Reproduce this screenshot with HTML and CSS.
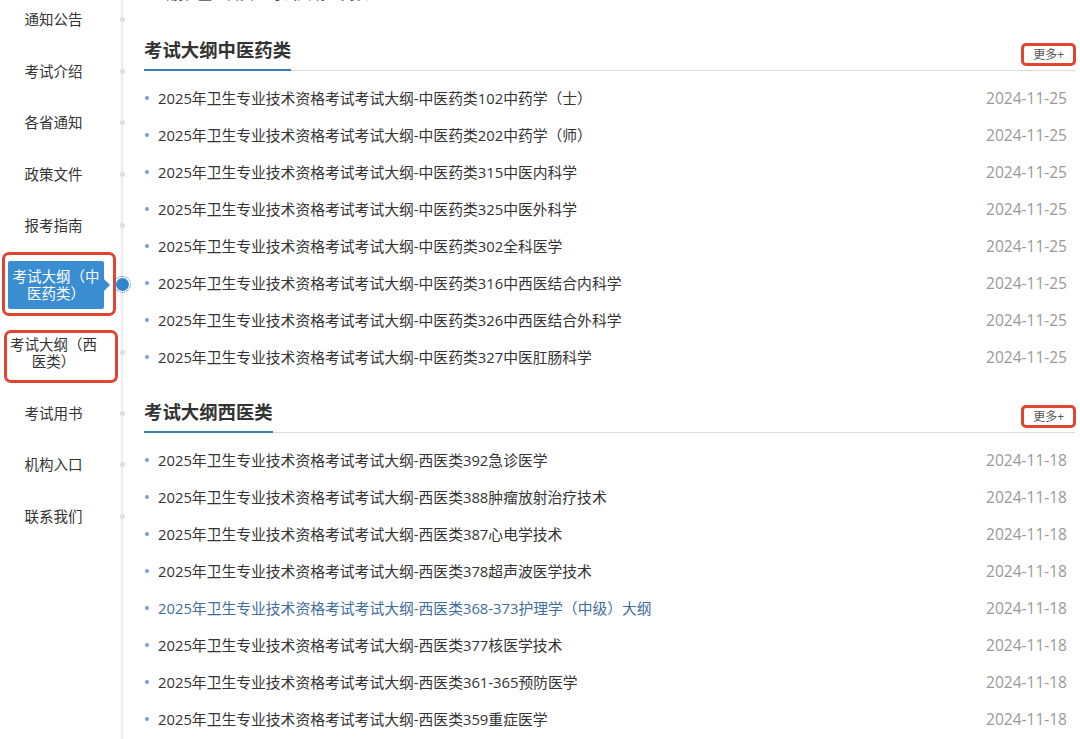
FILE: index.html
```html
<!doctype html>
<html>
  <head>
    <meta charset="utf-8">
    <title>考试大纲</title>
    <link rel="stylesheet" href="styles.css">
  </head>
  <body>
    <div class="page">
      <ul class="sidenav">
        <li class="nav-item"><a href="#">通知公告</a></li>
        <li class="nav-item"><a href="#">考试介绍</a></li>
        <li class="nav-item"><a href="#">各省通知</a></li>
        <li class="nav-item"><a href="#">政策文件</a></li>
        <li class="nav-item"><a href="#">报考指南</a></li>
        <li class="nav-item nav-active"><a href="#">考试大纲（中<br>医药类）</a></li>
        <li class="nav-item nav-tall"><a href="#">考试大纲（西<br>医类）</a></li>
        <li class="nav-item"><a href="#">考试用书</a></li>
        <li class="nav-item"><a href="#">机构入口</a></li>
        <li class="nav-item"><a href="#">联系我们</a></li>
      </ul>

      <div class="content">
        <div class="crumb">当前位置：首页 &gt; 考试大纲 &gt; 列表</div>

        <section class="block">
          <div class="block-head">
            <h2>考试大纲中医药类</h2>
            <a class="more" href="#">更多+</a>
          </div>
          <ul class="news">
            <li><a href="#">2025年卫生专业技术资格考试考试大纲-中医药类102中药学（士）</a><span class="date">2024-11-25</span></li>
            <li><a href="#">2025年卫生专业技术资格考试考试大纲-中医药类202中药学（师）</a><span class="date">2024-11-25</span></li>
            <li><a href="#">2025年卫生专业技术资格考试考试大纲-中医药类315中医内科学</a><span class="date">2024-11-25</span></li>
            <li><a href="#">2025年卫生专业技术资格考试考试大纲-中医药类325中医外科学</a><span class="date">2024-11-25</span></li>
            <li><a href="#">2025年卫生专业技术资格考试考试大纲-中医药类302全科医学</a><span class="date">2024-11-25</span></li>
            <li><a href="#">2025年卫生专业技术资格考试考试大纲-中医药类316中西医结合内科学</a><span class="date">2024-11-25</span></li>
            <li><a href="#">2025年卫生专业技术资格考试考试大纲-中医药类326中西医结合外科学</a><span class="date">2024-11-25</span></li>
            <li><a href="#">2025年卫生专业技术资格考试考试大纲-中医药类327中医肛肠科学</a><span class="date">2024-11-25</span></li>
          </ul>
        </section>

        <section class="block">
          <div class="block-head">
            <h2>考试大纲西医类</h2>
            <a class="more" href="#">更多+</a>
          </div>
          <ul class="news">
            <li><a href="#">2025年卫生专业技术资格考试考试大纲-西医类392急诊医学</a><span class="date">2024-11-18</span></li>
            <li><a href="#">2025年卫生专业技术资格考试考试大纲-西医类388肿瘤放射治疗技术</a><span class="date">2024-11-18</span></li>
            <li><a href="#">2025年卫生专业技术资格考试考试大纲-西医类387心电学技术</a><span class="date">2024-11-18</span></li>
            <li><a href="#">2025年卫生专业技术资格考试考试大纲-西医类378超声波医学技术</a><span class="date">2024-11-18</span></li>
            <li class="visited"><a href="#">2025年卫生专业技术资格考试考试大纲-西医类368-373护理学（中级）大纲</a><span class="date">2024-11-18</span></li>
            <li><a href="#">2025年卫生专业技术资格考试考试大纲-西医类377核医学技术</a><span class="date">2024-11-18</span></li>
            <li><a href="#">2025年卫生专业技术资格考试考试大纲-西医类361-365预防医学</a><span class="date">2024-11-18</span></li>
            <li><a href="#">2025年卫生专业技术资格考试考试大纲-西医类359重症医学</a><span class="date">2024-11-18</span></li>
          </ul>
        </section>
      </div>
    </div>
  </body>
</html>
```

FILE: styles.css
```css
html,
body {
  margin: 0;
  padding: 0;
  background: #fff;
  font-family: "Open Sans", "Noto Sans CJK SC", sans-serif;
  color: #333;
}
a {
  color: inherit;
  text-decoration: none;
}
.page {
  display: flex;
  min-height: 100vh;
  overflow: hidden;
}

/* left menu */
.sidenav {
  flex: 0 0 123px;
  box-sizing: border-box;
  margin: -6px 0 0;
  padding: 0;
  list-style: none;
  border-right: 2px solid #ececec;
}
.nav-item {
  position: relative;
  height: 51.5px;
  padding-right: 14px;
  display: flex;
  align-items: center;
  justify-content: center;
  font-size: 14.5px;
  line-height: 17px;
  text-align: center;
}
.nav-item::after {
  content: "";
  position: absolute;
  right: -3.5px;
  top: 50%;
  width: 5px;
  height: 5px;
  margin-top: -2.5px;
  border-radius: 50%;
  background: #dedede;
}
.nav-active {
  height: 66px;
  justify-content: flex-start;
  padding-left: 8px;
}
.nav-active a {
  position: relative;
  width: 96px;
  height: 48px;
  display: flex;
  align-items: center;
  justify-content: center;
  background: #3b8dd1;
  color: #fff;
  border-radius: 2px;
}
.nav-active a::after {
  content: "";
  position: absolute;
  right: -6px;
  top: 50%;
  margin-top: -6px;
  border-left: 6px solid #3b8dd1;
  border-top: 6px solid transparent;
  border-bottom: 6px solid transparent;
}
.nav-active::after {
  right: -7.5px;
  width: 13px;
  height: 13px;
  margin-top: -6.5px;
  background: #2f86cf;
  outline: 1px dotted #2f86cf;
  outline-offset: 1px;
}
.nav-tall {
  height: 70px;
}
.nav-active::before,
.nav-tall::before {
  content: "";
  position: absolute;
  left: 2px;
  width: 108px;
  top: 0;
  bottom: 2px;
  border: 3px solid #e0452f;
  border-radius: 7px;
}
.nav-tall::before {
  left: 4px;
  top: 12px;
  bottom: 5px;
}

/* main column */
.content {
  flex: 1;
  padding: 0 5px 0 21px;
}
.crumb {
  height: 20px;
  margin-top: -16px;
  padding-left: 12px;
  font-size: 14px;
  line-height: 20px;
  color: #555;
}
.block {
  margin-top: 23px;
}
.block:first-of-type {
  margin-top: 32px;
}
.block-head {
  height: 34px;
  display: flex;
  justify-content: space-between;
  align-items: flex-end;
  border-bottom: 1px solid #dcdcdc;
}
.block-head h2 {
  margin: 0 0 -1px;
  padding-bottom: 5px;
  font-size: 18.4px;
  line-height: 28px;
  font-weight: bold;
  color: #333;
  border-bottom: 2px solid #3c7fb4;
}
.more {
  margin: 0 -1px 4px 0;
  padding: 0 9px;
  font-size: 12px;
  line-height: 17px;
  color: #555;
  border: 3px solid #e0452f;
  border-radius: 5px;
}
.news {
  margin: 0;
  padding: 8px 0 0;
  list-style: none;
}
.news li {
  position: relative;
  height: 37px;
  padding: 0 8px 0 14px;
  display: flex;
  align-items: center;
  justify-content: space-between;
  font-size: 14.8px;
}
.news li::before {
  content: "";
  position: absolute;
  left: 1px;
  top: 50%;
  width: 4px;
  height: 4px;
  margin-top: -2px;
  border-radius: 50%;
  background: #7d9ccf;
}
.news .visited a {
  color: #3f6d9c;
}
.date {
  font-size: 15.5px;
  color: #999;
}
```
